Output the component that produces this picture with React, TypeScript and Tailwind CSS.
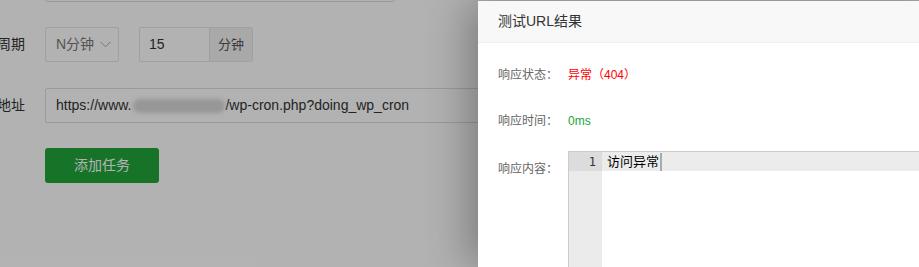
import React from "react";

const font = { fontFamily: '"Liberation Sans", "Noto Sans CJK SC", sans-serif' };

function Label({ text }: { text: string }) {
  return (
    <div className="flex justify-end items-center w-[25px] h-full whitespace-nowrap text-[14px] text-[#333]">
      {text}
    </div>
  );
}

function Page() {
  return (
    <div className="flex flex-col w-full h-full bg-white">
      <div className="flex -mt-[34px] pl-[45px]">
        <div className="border border-[#ddd] rounded-[3px] w-[350px] h-[36px]" />
      </div>
      <div className="flex items-center gap-[20px] mt-[25px] h-[35px]">
        <Label text="执行周期" />
        <div className="flex items-center gap-[20px] h-full">
          <div className="flex justify-between items-center border border-[#e6e6e6] rounded-[2px] pr-[7px] pl-[10px] w-[74px] h-full text-[#777] text-[14px]">
            <span>N分钟</span>
            <svg width="11" height="7" viewBox="0 0 11 7" fill="none">
              <path d="M0.5 0.8 L5.5 5.8 L10.5 0.8" stroke="#aaa" strokeWidth="1" />
            </svg>
          </div>
          <div className="flex border border-[#e6e6e6] rounded-[2px] h-full text-[14px]">
            <div className="flex items-center pl-[9px] w-[69px] text-[#333]">15</div>
            <div className="flex justify-center items-center bg-[#f2f2f2] border-[#e6e6e6] border-l w-[43px] text-[#555] text-[13px]">
              分钟
            </div>
          </div>
        </div>
      </div>
      <div className="flex items-center gap-[20px] mt-[26px] h-[35px]">
        <Label text="URL地址" />
        <div className="flex items-center border border-[#ddd] rounded-[2px] pl-[10px] w-[600px] h-full text-[#333] text-[14px] whitespace-nowrap">
          <span>https://www.</span>
          <span className="bg-[#d8d8d8] blur-[2px] ml-[2px] rounded-full w-[92px] h-[14px]" />
          <span>/wp-cron.php?doing_wp_cron</span>
        </div>
      </div>
      <div className="flex mt-[25px] pl-[45px]">
        <button className="flex justify-center items-center bg-[#20a53a] rounded-[3px] w-[114px] h-[35px] text-[14px] text-white">
          添加任务
        </button>
      </div>
    </div>
  );
}

function Dialog() {
  return (
    <div className="top-[1px] bottom-0 left-[478px] absolute flex flex-col bg-white shadow-[-10px_0_40px_rgba(0,0,0,0.3)] w-[460px]">
      <div className="flex items-center bg-[#f8f8f8] pl-[20px] border-[#eee] border-b h-[42px] text-[#333] text-[14px] shrink-0">
        测试URL结果
      </div>
      <div className="flex flex-col pl-[20px] text-[12px]">
        <div className="flex items-center mt-[22px] h-[20px]">
          <span className="w-[70px] text-[#666] shrink-0">响应状态：</span>
          <span className="text-[#ff0000]">异常（404）</span>
        </div>
        <div className="flex items-center mt-[26px] h-[20px]">
          <span className="w-[70px] text-[#666] shrink-0">响应时间：</span>
          <span className="text-[#20a53a]">0ms</span>
        </div>
        <div className="flex mt-[20px]">
          <span className="pt-[9px] w-[70px] text-[#666] shrink-0">响应内容：</span>
          <div className="flex border-[#ccc] border-t border-l w-[400px] h-[200px]">
            <div className="flex flex-col bg-[#ebebeb] w-[33px] shrink-0">
              <div className="flex justify-end items-center bg-[#dcdcdc] pr-[6px] h-[19px] text-[#333] text-[12px]" style={{ fontFamily: '"DejaVu Sans Mono", monospace' }}>
                1
              </div>
            </div>
            <div className="flex flex-col flex-1">
              <div className="flex items-center bg-[#ececec] pl-[5px] h-[19px] text-[13px] text-black">
                <span>访问异常</span>
                <span className="bg-[#aaa] ml-[1px] w-[2px] h-[18px]" />
              </div>
            </div>
          </div>
        </div>
      </div>
    </div>
  );
}

export default function App() {
  return (
    <div className="relative bg-white w-[919px] h-[267px] overflow-hidden" style={font}>
      <Page />
      <div className="absolute inset-0 bg-black/30" />
      <Dialog />
    </div>
  );
}
